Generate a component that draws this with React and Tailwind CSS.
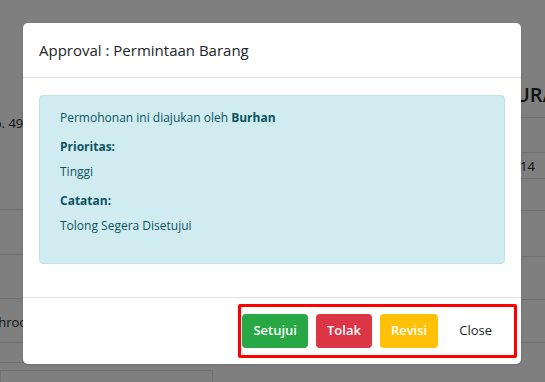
import React from "react";

function BackgroundPage() {
  return (
    <div className="flex h-full text-[#212529]">
      <div className="flex w-[213px] shrink-0 flex-col">
        <div className="h-[210px] shrink-0 border-b border-[#dee2e6] pt-[114px]">
          <p className="-ml-[16px] whitespace-nowrap text-[13px] leading-[18px]">No. 4921</p>
        </div>
        <div className="h-[45px] shrink-0 border-b border-[#dee2e6]" />
        <div className="h-[44px] shrink-0 border-b border-[#dee2e6] pt-[12px]">
          <p className="-ml-[4px] text-[13px] leading-[18px]">-</p>
        </div>
        <div className="h-[44px] shrink-0 border-b border-[#dee2e6] pt-[14px]">
          <p className="-ml-[22px] whitespace-nowrap text-[13px] leading-[18px]">Bathroom</p>
        </div>
        <div className="h-[20px] shrink-0 border-b border-[#dee2e6]" />
        <div className="mt-[7px] h-[30px] shrink-0 border border-[#dee2e6]" />
      </div>
      <div className="flex flex-1 flex-col">
        <div className="h-[118px] shrink-0 border-b border-[#dee2e6] pt-[82px]">
          <h2 className="whitespace-nowrap pl-[302px] text-[20px] font-semibold leading-[26px]">URAIAN</h2>
        </div>
        <div className="h-[35px] shrink-0 border-b border-[#dee2e6]" />
        <div className="h-[26px] shrink-0 border-b border-[#dee2e6] pt-[4px]">
          <p className="whitespace-nowrap pl-[307px] text-[13px] leading-[18px]">14</p>
        </div>
        <div className="h-[32px] shrink-0 border-b border-[#dee2e6]" />
        <div className="h-[46px] shrink-0 border-b border-[#dee2e6]" />
        <div className="h-[43px] shrink-0 border-b border-[#dee2e6]" />
        <div className="h-[43px] shrink-0 border-b border-[#dee2e6]" />
      </div>
    </div>
  );
}

function ApprovalModal() {
  return (
    <div className="absolute left-[23px] top-[23px] w-[498px] rounded-[5px] bg-white shadow-sm">
      <div className="flex h-[55px] items-center border-b border-[#dee2e6] px-[16px]">
        <h5 className="text-[15px] leading-[20px] text-[#212529]">Approval : Permintaan Barang</h5>
      </div>
      <div className="px-[16px] pt-[17px] pb-[33px]">
        <div className="rounded-[4px] border border-[#bee5eb] bg-[#d1ecf1] px-[20px] pt-[13px] pb-[17px] text-[12px] leading-[18px] text-[#0c5460]">
          <p className="mb-[11px]">
            Permohonan ini diajukan oleh <b className="font-bold">Burhan</b>
          </p>
          <p className="mb-[7px] font-bold">Prioritas:</p>
          <p className="mb-[11px]">Tinggi</p>
          <p className="mb-[7px] font-bold">Catatan:</p>
          <p className="mb-[11px]">Tolong Segera Disetujui</p>
        </div>
      </div>
      <div className="relative flex h-[67px] items-center justify-end gap-[8px] border-t border-[#dee2e6] px-[16px]">
        <button className="h-[34px] rounded-[4px] bg-[#28a745] px-[11px] text-[13px] font-semibold text-white">Setujui</button>
        <button className="h-[34px] rounded-[4px] bg-[#dc3545] px-[11px] text-[13px] font-semibold text-white">Tolak</button>
        <button className="h-[34px] rounded-[4px] bg-[#ffc107] px-[11px] text-[13px] font-semibold text-white">Revisi</button>
        <button className="h-[34px] rounded-[4px] px-[13px] text-[13px] text-[#212529]">Close</button>
        <div className="pointer-events-none absolute left-[215px] top-[6px] h-[54px] w-[279px] rounded-[2px] border-[3px] border-[#ff0000]" />
      </div>
    </div>
  );
}

export default function App() {
  return (
    <div className="relative h-[382px] w-[545px] overflow-hidden bg-white font-['Open_Sans',sans-serif]">
      <BackgroundPage />
      <div className="absolute inset-0 bg-black/50" />
      <ApprovalModal />
    </div>
  );
}
